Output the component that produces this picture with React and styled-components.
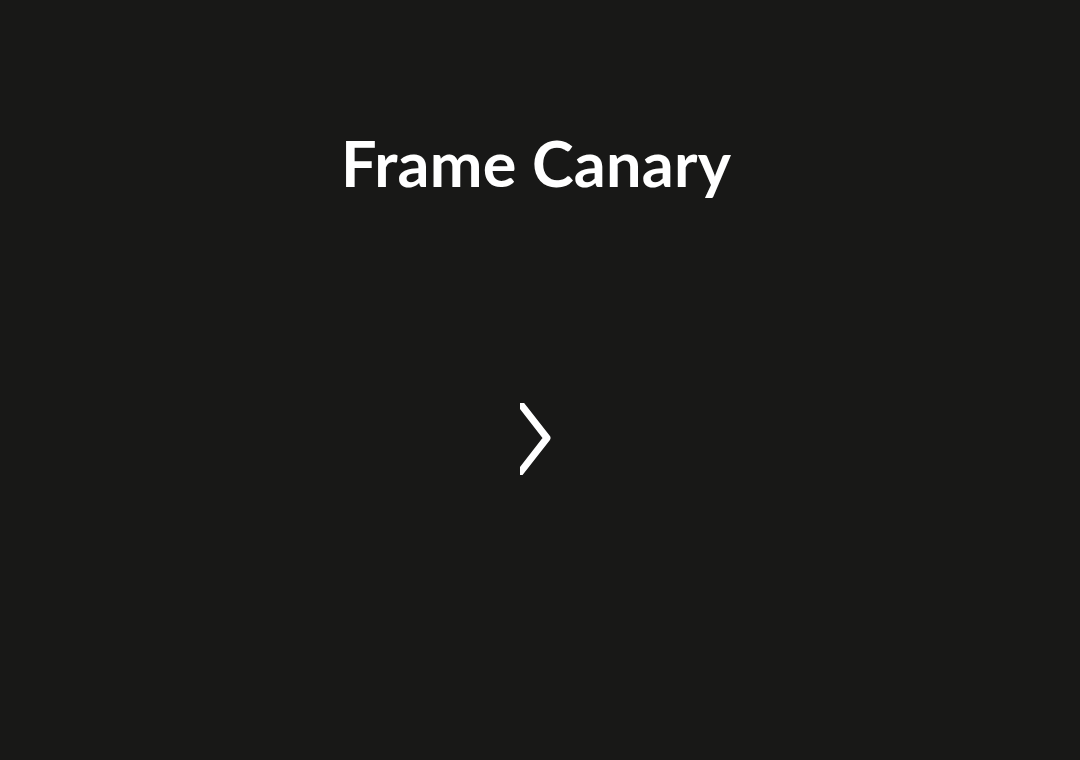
import React from 'react';
import styled, { createGlobalStyle } from 'styled-components';

const GlobalStyle = createGlobalStyle`
	html, body {
		margin: 0;
		padding: 0;
		background: #181817;
	}
	body {
		font-family: Lato, 'Open Sans', 'Liberation Sans', sans-serif;
		color: #ffffff;
	}
`;

const Page = styled.div`
	display: flex;
	flex-direction: column;
	align-items: center;
	min-height: 100vh;
	padding-right: 8px;
	box-sizing: border-box;
	background: #181817;
`;

const Title = styled.h1`
	margin: 118px 0 0;
	font-family: Lato, 'Open Sans', sans-serif;
	font-size: 63px;
	line-height: 90px;
	font-weight: 700;
	letter-spacing: 0.2px;
	color: #ffffff;
`;

const NextButton = styled.button`
	margin-top: 195px;
	padding: 0;
	border: none;
	background: transparent;
	width: 32px;
	height: 72px;
	cursor: pointer;
	display: flex;

	svg {
		display: block;
	}
`;

const Chevron = () => (
	<svg width='32' height='72' viewBox='0 0 32 72'>
		<path
			d='M-5 -6 L27 35 L-5 76'
			fill='none'
			stroke='#ffffff'
			strokeWidth='7'
			strokeLinejoin='round'
		/>
	</svg>
);

export default function App() {
	return (
		<Page>
			<GlobalStyle />
			<Title>Frame Canary</Title>
			<NextButton type='button' aria-label='Next'>
				<Chevron />
			</NextButton>
		</Page>
	);
}
